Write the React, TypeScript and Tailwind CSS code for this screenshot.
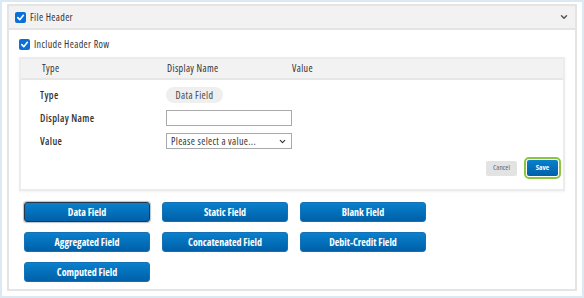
import { ChevronDown } from 'lucide-react';

function Check() {
  return (
    <span className="flex h-[11px] w-[11px] shrink-0 items-center justify-center rounded-[2px] bg-[#0b6fd8]">
      <svg width="9" height="9" viewBox="0 0 10 10">
        <path d="M2 5.2 L4.2 7.4 L8.2 2.6" fill="none" stroke="#fff" strokeWidth="1.8" strokeLinecap="round" strokeLinejoin="round" />
      </svg>
    </span>
  );
}

function FieldButton({ label, active }: { label: string; active?: boolean }) {
  return (
    <button
      className={`h-[20px] w-[126px] rounded-[3px] bg-gradient-to-b from-[#0a80cc] to-[#0060a8] text-[10px] font-bold tracking-normal text-white ${
        active ? 'border border-[#23384a] shadow-[0_0_1px_1px_rgba(60,80,100,0.35)]' : 'border border-[#1571b6]'
      }`}
    >
      {label}
    </button>
  );
}

export default function App() {
  return (
    <div
      className="h-[298px] w-[584px] border-2 border-[#dce9f3] bg-white px-[5px] pt-[2px] tracking-[0.35px] text-[#333] font-stretch-[80%]"
      style={{ fontFamily: '"Open Sans", "Noto Sans", sans-serif' }}
    >
      <div className="h-[287px] border-2 border-[#e4e4e4]">
        {/* Panel header */}
        <div className="flex h-[24px] items-center justify-between border-b-2 border-[#e4e4e4] bg-[#f2f2f2] pl-[6px] pr-[6px]">
          <div className="flex items-center gap-[4px] text-[10px]">
            <Check />
            <span>File Header</span>
          </div>
          <ChevronDown size={10} strokeWidth={3.5} className="text-[#555]" />
        </div>

        <div className="px-[10px] pt-[8px]">
          <div className="flex h-[12px] items-center gap-[4px] text-[10px]">
            <Check />
            <span>Include Header Row</span>
          </div>

          {/* Editor table */}
          <div className="mt-[7px] h-[134px] border-2 border-[#ececec] shadow-[0_1px_2px_rgba(0,0,0,0.06)]">
            <div className="flex h-[21px] items-center border-b-2 border-[#e6e6e6] bg-[#f2f2f2] text-[10px]">
              <span className="w-[146px] pl-[21px]">Type</span>
              <span className="w-[125px]">Display Name</span>
              <span>Value</span>
            </div>

            <div className="pl-[19px] pt-[7px] text-[10px]">
              <div className="grid grid-cols-[126px_126px] grid-rows-[16px_16px_16px] items-center gap-y-[7px]">
                <span className="font-semibold">Type</span>
                <span className="flex h-[16px] w-[57px] items-center justify-center rounded-full bg-[#efefef] text-[#444]">
                  Data Field
                </span>
                <span className="font-semibold">Display Name</span>
                <input className="h-[16px] w-[126px] border border-[#a9a9a9] bg-white" />
                <span className="font-semibold">Value</span>
                <div className="flex h-[16px] w-[126px] items-center justify-between border border-[#a9a9a9] bg-white pl-[4px] pr-[4px]">
                  <span>Please select a value...</span>
                  <ChevronDown size={9} strokeWidth={3} />
                </div>
              </div>
            </div>

            <div className="mt-[8px] flex items-center justify-end gap-[7px] pr-[2px]">
              <button className="h-[15px] w-[31px] rounded-[2px] bg-[#e3e3e3] text-[7.5px] tracking-normal text-[#666]">Cancel</button>
              <div className="rounded-[5px] border-2 border-[#8cc63f] p-[1px]">
                <button className="flex h-[16px] w-[31px] items-center justify-center rounded-[2px] bg-gradient-to-b from-[#0a80cc] to-[#0060a8] text-[7.5px] font-bold tracking-normal text-white">
                  Save
                </button>
              </div>
            </div>
          </div>

          {/* Field buttons */}
          <div className="mt-[11px] grid grid-cols-[126px_126px_126px] gap-x-[12px] gap-y-[10px] pl-[5px]">
            <FieldButton label="Data Field" active />
            <FieldButton label="Static Field" />
            <FieldButton label="Blank Field" />
            <FieldButton label="Aggregated Field" />
            <FieldButton label="Concatenated Field" />
            <FieldButton label="Debit-Credit Field" />
            <FieldButton label="Computed Field" />
          </div>
        </div>
      </div>
    </div>
  );
}
